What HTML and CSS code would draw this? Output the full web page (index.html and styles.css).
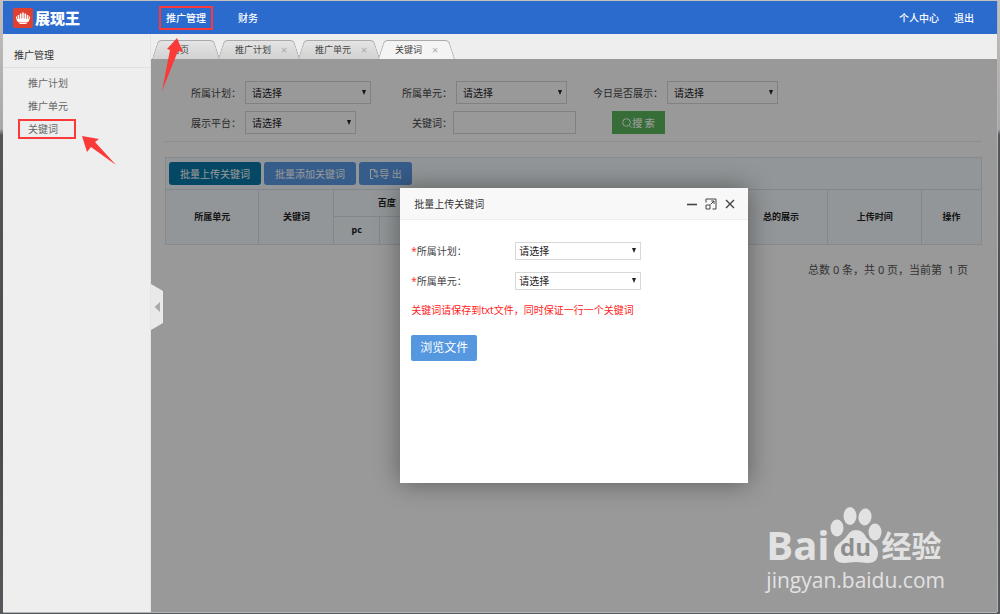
FILE: index.html
```html
<!DOCTYPE html>
<html lang="zh-CN">
<head>
  <meta charset="UTF-8" />
  <meta name="viewport" content="width=device-width, initial-scale=1" />
  <title>展现王</title>
  <link rel="stylesheet" href="styles.css">
</head>
<body>
  <div class="app">
    <header class="navbar">
      <a class="logo" href="#">
        <svg class="logo-icon" viewBox="0 0 20 20">
          <rect width="20" height="20" rx="2" fill="#e0402f" />
          <path fill="#fff" d="M9.200 4.500h1.600v6h.7V5.600h1.600v5.200h.7V7h1.500v4h.6V8.500H17c0 3-1 5.200-3 6H6c-2-.8-3-3-3-6h1.100V11h.6V7h1.500v3.800h.7V5.600h1.600v4.900h.7z" />
          <path fill="#fff" d="M6.500 15h7v1h-7z" />
        </svg>
        <span>展现王</span>
      </a>
      <nav class="main-nav">
        <a class="marked" href="#">推广管理</a>
        <a href="#">财务</a>
      </nav>
      <nav class="user-nav">
        <a href="#">个人中心</a>
        <a href="#">退出</a>
      </nav>
    </header>

    <div class="body">
      <aside class="sidebar">
        <h2>推广管理</h2>
        <ul>
          <li><a href="#">推广计划</a></li>
          <li><a href="#">推广单元</a></li>
          <li><a class="marked" href="#">关键词</a></li>
        </ul>
      </aside>

      <div class="content">
        <ul class="tabs">
          <li class="tab home"><a href="#">首页</a></li>
          <li class="tab"><a href="#">推广计划</a><button aria-label="关闭">×</button></li>
          <li class="tab"><a href="#">推广单元</a><button aria-label="关闭">×</button></li>
          <li class="tab active"><a href="#">关键词</a><button aria-label="关闭">×</button></li>
        </ul>

        <main>
          <form class="filters">
            <div class="field">
              <label for="plan">所属计划：</label>
              <span class="select wide"><select id="plan"><option>请选择</option></select></span>
            </div>
            <div class="field">
              <label for="unit">所属单元：</label>
              <span class="select"><select id="unit"><option>请选择</option></select></span>
            </div>
            <div class="field">
              <label for="today">今日是否展示：</label>
              <span class="select"><select id="today"><option>请选择</option></select></span>
            </div>
            <div class="field">
              <label for="platform">展示平台：</label>
              <span class="select"><select id="platform"><option>请选择</option></select></span>
            </div>
            <div class="field">
              <label for="keyword">关键词：</label>
              <input id="keyword" type="text">
            </div>
            <div class="field">
              <button class="search-btn" type="button">
                <svg viewBox="0 0 10 10" fill="none" stroke="#fff">
                  <circle cx="4.500" cy="4.500" r="3.800" />
                  <path d="M7.200 7.200L9.600 9.600" />
                </svg>搜 索
              </button>
            </div>
          </form>

          <section class="panel">
            <div class="toolbar">
              <button class="btn dark">批量上传关键词</button>
              <button class="btn">批量添加关键词</button>
              <button class="btn export">
                <svg viewBox="0 0 10 10" fill="none" stroke="#fff">
                  <path d="M4 9.500H1.500v-9h4.500l2 2v2" />
                  <path d="M4.500 7h4.500M7.500 5.200L9.300 7 7.500 8.800M5.500.5v2.500h2.500" />
                </svg>导 出
              </button>
            </div>
            <table>
              <colgroup>
                <col class="c-unit"><col class="c-word"><col class="c-pc"><col class="c-mobile">
                <col><col class="c-total"><col class="c-time"><col class="c-action">
              </colgroup>
              <thead>
                <tr>
                  <th rowspan="2">所属单元</th>
                  <th rowspan="2">关键词</th>
                  <th colspan="2">百度</th>
                  <th></th>
                  <th rowspan="2">总的展示</th>
                  <th rowspan="2">上传时间</th>
                  <th rowspan="2">操作</th>
                </tr>
                <tr>
                  <th>pc</th>
                  <th></th>
                  <th></th>
                </tr>
              </thead>
            </table>
          </section>
          <p class="pager">总数 0 条，共 0 页，当前第 &nbsp;1 页</p>

          <div class="overlay">
            <div class="modal" role="dialog" aria-labelledby="modal-title">
              <div class="modal-header">
                <h3 id="modal-title">批量上传关键词</h3>
                <button aria-label="最小化">
                  <svg viewBox="0 0 12 12"><path d="M1 6.500h10" stroke-width="1.600" /></svg>
                </button>
                <button aria-label="最大化">
                  <svg viewBox="0 0 12 12"><path d="M1 4.500V1h10v10H7.500M1 7h4v4H1zM5.500 6.500L9 3M6.200 3H9v2.800" /></svg>
                </button>
                <button aria-label="关闭">
                  <svg viewBox="0 0 12 12"><path d="M2 2l8 8M10 2l-8 8" stroke-width="1.400" /></svg>
                </button>
              </div>
              <form class="modal-body">
                <div class="row">
                  <label for="m-plan"><i>*</i>所属计划：</label>
                  <span class="select wide"><select id="m-plan"><option>请选择</option></select></span>
                </div>
                <div class="row">
                  <label for="m-unit"><i>*</i>所属单元：</label>
                  <span class="select wide"><select id="m-unit"><option>请选择</option></select></span>
                </div>
                <p class="warning">关键词请保存到txt文件，同时保证一行一个关键词</p>
                <button class="browse-btn" type="button">浏览文件</button>
              </form>
            </div>
          </div>
        </main>
        <button class="collapse" aria-label="收起">
          <svg viewBox="0 0 12 46">
            <path fill="#e9e9e9" d="M0 0l12 7v32L0 46z" />
            <path fill="#aaa" d="M3.500 23L9 18v10z" />
          </svg>
        </button>
      </div>
    </div>

    <svg class="arrow arrow-nav" viewBox="0 0 24 56">
      <path fill="#fb3939" d="M16 1l6 14-5-1L1 54 9 13l-3-1z" />
    </svg>
    <svg class="arrow arrow-side" viewBox="0 0 36 32">
      <path fill="#fb3939" d="M1 1l17 3-4 3 21 23L10 12l-4 5z" />
    </svg>

    <div class="watermark">
      <div class="brand">
        <span class="bai">Bai</span>
        <span class="paw">
          <svg viewBox="0 0 52 58">
            <ellipse cx="7" cy="22" rx="6.500" ry="8.500" />
            <ellipse cx="20" cy="10" rx="6.500" ry="9" />
            <ellipse cx="35" cy="11" rx="6.500" ry="8.500" transform="rotate(8 35 11)" />
            <ellipse cx="45" cy="26" rx="6.500" ry="8.500" />
            <path d="M26 24c5 0 8 3 10 7 3 5 12 8 12 16 0 7-4 10-10 10-5 0-7-1-12-1s-7 1-12 1c-6 0-10-3-10-10 0-8 8-11 12-16 3-4 5-7 10-7z" />
          </svg>
          <span>du</span>
        </span>
        <span class="jingyan">经验</span>
      </div>
      <div class="site">jingyan.baidu.com</div>
    </div>
  </div>
</body>
</html>
```
FILE: styles.css
```css
* {
  box-sizing: border-box;
}

body {
  margin: 0;
  padding: 1px 3px 2px;
  min-height: 100vh;
  display: flex;
  background: linear-gradient(#c4c0be, #a8a8a8 21%, #55565a 22%, #4a4a4c 70%, #55585c);
  font-family: "Noto Sans", "Noto Sans CJK SC", sans-serif;
  font-size: 10px;
  line-height: 16px;
  color: #444;
}

h2, h3, p, ul {
  margin: 0;
  padding: 0;
  font-weight: normal;
}

ul {
  list-style: none;
}

a {
  color: inherit;
  text-decoration: none;
}

button, input, select {
  font: inherit;
  color: inherit;
  margin: 0;
}

button {
  padding: 0;
  border: none;
  background: none;
  cursor: pointer;
}

.app {
  position: relative;
  flex: 1;
  display: flex;
  flex-direction: column;
  box-shadow: 1px 0 0 #b4b4b4, 0 1px 0 #b4b4b4;
}

/* top bar */
.navbar {
  display: flex;
  align-items: center;
  height: 33px;
  background: #2b6bce;
  color: #fff;
  font-weight: 500;
}

.logo {
  display: flex;
  align-items: center;
  gap: 2px;
  width: 148px;
  padding-left: 10px;
  font-size: 15px;
  font-weight: 900;
}

.logo-icon {
  width: 20px;
  height: 20px;
}

.main-nav {
  display: flex;
  gap: 18px;
}

.main-nav a {
  padding: 2px 5px;
  border: 2px solid transparent;
}

.main-nav a:first-child {
  margin-left: 8px;
}

.main-nav .marked,
.sidebar .marked {
  border: 2px solid #fb3939;
}

.user-nav {
  display: flex;
  gap: 15px;
  margin-left: auto;
  padding-right: 23px;
}

.body {
  flex: 1;
  display: flex;
}

/* left menu */
.sidebar {
  width: 148px;
  background: #eee;
  border-right: 1px solid #e4e4e4;
}

.sidebar h2 {
  padding: 13px 11px 4px;
  border-bottom: 1px solid #e0e0e0;
  font-size: 10px;
  color: #333;
}

.sidebar ul {
  padding: 3px 15px;
}

.sidebar li {
  height: 23px;
  display: flex;
  align-items: center;
  color: #666;
}

.sidebar li a {
  width: 58px;
  padding: 0 8px;
  border: 2px solid transparent;
  white-space: nowrap;
}

.content {
  position: relative;
  flex: 1;
  display: flex;
  flex-direction: column;
  background: #eee;
}

/* tabs */
.tabs {
  display: flex;
  height: 25px;
  padding-top: 6px;
  font-size: 9px;
}

.tab {
  position: relative;
  z-index: 0;
  display: flex;
  align-items: center;
  gap: 10px;
  width: 84px;
  padding-left: 18px;
  margin-right: -4px;
}

.tab.home {
  width: 70px;
  padding-left: 20px;
}

.tab.active {
  z-index: 1;
  width: 79px;
}

.tab::before,
.tab::after {
  content: "";
  position: absolute;
  z-index: -1;
  top: 0;
  bottom: 0;
  background: linear-gradient(#e4e4e4, #d2d2d2);
  border: 1px solid #aaa;
  border-bottom: none;
}

.tab::before {
  left: 4px;
  right: 40%;
  border-right: none;
  border-radius: 4px 0 0 0;
  transform: skewX(-18deg);
}

.tab::after {
  left: 40%;
  right: 4px;
  border-left: none;
  border-radius: 0 4px 0 0;
  transform: skewX(18deg);
}

.tab.active::before,
.tab.active::after {
  background: #f4f4f4;
}

.tab button {
  font-size: 11px;
  line-height: 10px;
  color: #aaa;
}

main {
  position: relative;
  flex: 1;
  padding: 22px 15px 22px 14px;
  background: #fff;
}

/* filters */
.filters {
  display: grid;
  grid-template-columns: repeat(3, 211px);
  row-gap: 7px;
  padding-bottom: 7px;
  border-bottom: 1px solid #ececec;
}

.field {
  display: flex;
  align-items: center;
  height: 23px;
}

.field label {
  width: 77px;
  padding-right: 1px;
  text-align: right;
}

.field .select {
  margin-left: 3px;
}

.select {
  position: relative;
  display: flex;
  width: 111px;
  height: 23px;
}

.select.wide {
  width: 126px;
}

.select select {
  appearance: none;
  width: 100%;
  padding: 0 6px;
  border: 1px solid #d8d8d8;
  border-radius: 0;
  background: #fff;
  color: #222;
}

.select::after {
  content: "";
  position: absolute;
  right: 5px;
  top: 50%;
  margin-top: -3px;
  border: 2px solid transparent;
  border-top: 5px solid #222;
  border-bottom: none;
  pointer-events: none;
}

.field input {
  width: 123px;
  height: 23px;
  border: 1px solid #d8d8d8;
}

.search-btn {
  display: flex;
  align-items: center;
  justify-content: center;
  width: 53px;
  height: 23px;
  margin-left: 25px;
  background: #5cb85c;
  color: #fff;
  font-weight: 500;
}

.search-btn svg,
.export svg {
  width: 10px;
  height: 10px;
}

/* keyword table */
.panel {
  margin-top: 15px;
  border: 1px solid #e0e6ec;
  background: #f5fafe;
}

.toolbar {
  display: flex;
  gap: 3px;
  padding: 4px 3px;
}

.btn {
  display: flex;
  align-items: center;
  justify-content: center;
  width: 92px;
  height: 23px;
  border-radius: 3px;
  background: #5a9ae6;
  color: #fff;
}

.btn.dark {
  background: #0778a8;
}

.btn.export {
  width: 53px;
}

table {
  width: 100%;
  border-collapse: collapse;
  table-layout: fixed;
  border-style: hidden;
}

th {
  height: 27px;
  padding: 0;
  border: 1px solid #dbe2ea;
  font-size: 9px;
  color: #222;
}

.panel table {
  border-top: 1px solid #dbe2ea;
}

.c-unit { width: 11.4%; }
.c-word { width: 9.2%; }
.c-pc { width: 5.6%; }
.c-mobile { width: 7.4%; }
.c-total { width: 11.5%; }
.c-time { width: 11.5%; }
.c-action { width: 7.3%; }

.pager {
  padding: 17px 14px;
  text-align: right;
  font-size: 11px;
  color: #555;
}

/* dialog */
.overlay {
  position: absolute;
  inset: 0;
  display: flex;
  align-items: center;
  justify-content: center;
  background: rgba(0, 0, 0, 0.4);
}

.modal {
  width: 41.1%;
  min-height: 295px;
  background: #fff;
  box-shadow: 0 0 24px rgba(0, 0, 0, 0.4);
}

.modal-header {
  display: flex;
  align-items: center;
  gap: 7px;
  height: 32px;
  padding: 0 12px 0 14px;
  background: #f8f8f8;
  border-bottom: 1px solid #eee;
}

.modal-header h3 {
  flex: 1;
  font-size: 10px;
  color: #333;
}

.modal-header svg {
  display: block;
  width: 12px;
  height: 12px;
  fill: none;
  stroke: #444;
}

.modal-body {
  padding: 22px 11px;
}

.row {
  display: flex;
  align-items: center;
  height: 18px;
  margin-bottom: 12px;
}

.row label {
  width: 104px;
}

.row i {
  font-style: normal;
  color: #f33;
}

.row .select {
  height: 18px;
}

.row select {
  padding: 0 3px;
}

.warning {
  margin-bottom: 17px;
  color: #f22;
}

.browse-btn {
  width: 66px;
  height: 26px;
  border-radius: 2px;
  background: #5598e0;
  color: #fff;
  font-size: 12px;
}

.collapse {
  position: absolute;
  left: 0;
  top: 250px;
  width: 12px;
  height: 46px;
}

.collapse svg {
  display: block;
}

/* red pointers */
.arrow {
  position: absolute;
}

.arrow-nav {
  left: 158px;
  top: 36px;
  width: 24px;
  height: 56px;
}

.arrow-side {
  left: 78px;
  top: 134px;
  width: 36px;
  height: 32px;
}

/* watermark */
.watermark {
  position: absolute;
  right: 52px;
  bottom: 18px;
  color: #e2e2e2;
  font-family: "Open Sans", "Noto Sans CJK SC", sans-serif;
}

.brand {
  display: flex;
  align-items: flex-end;
  font-weight: 700;
}

.bai {
  font-size: 40px;
  line-height: 42px;
}

.paw {
  position: relative;
  width: 52px;
  height: 60px;
}

.paw svg {
  display: block;
  width: 52px;
  height: 58px;
  fill: #e2e2e2;
}

.paw span {
  position: absolute;
  left: 0;
  right: 0;
  bottom: 5px;
  text-align: center;
  font-size: 24px;
  line-height: 28px;
  color: #8e8e8e;
}

.jingyan {
  font-size: 30px;
  line-height: 40px;
}

.site {
  font-size: 21px;
  line-height: 28px;
}
```
